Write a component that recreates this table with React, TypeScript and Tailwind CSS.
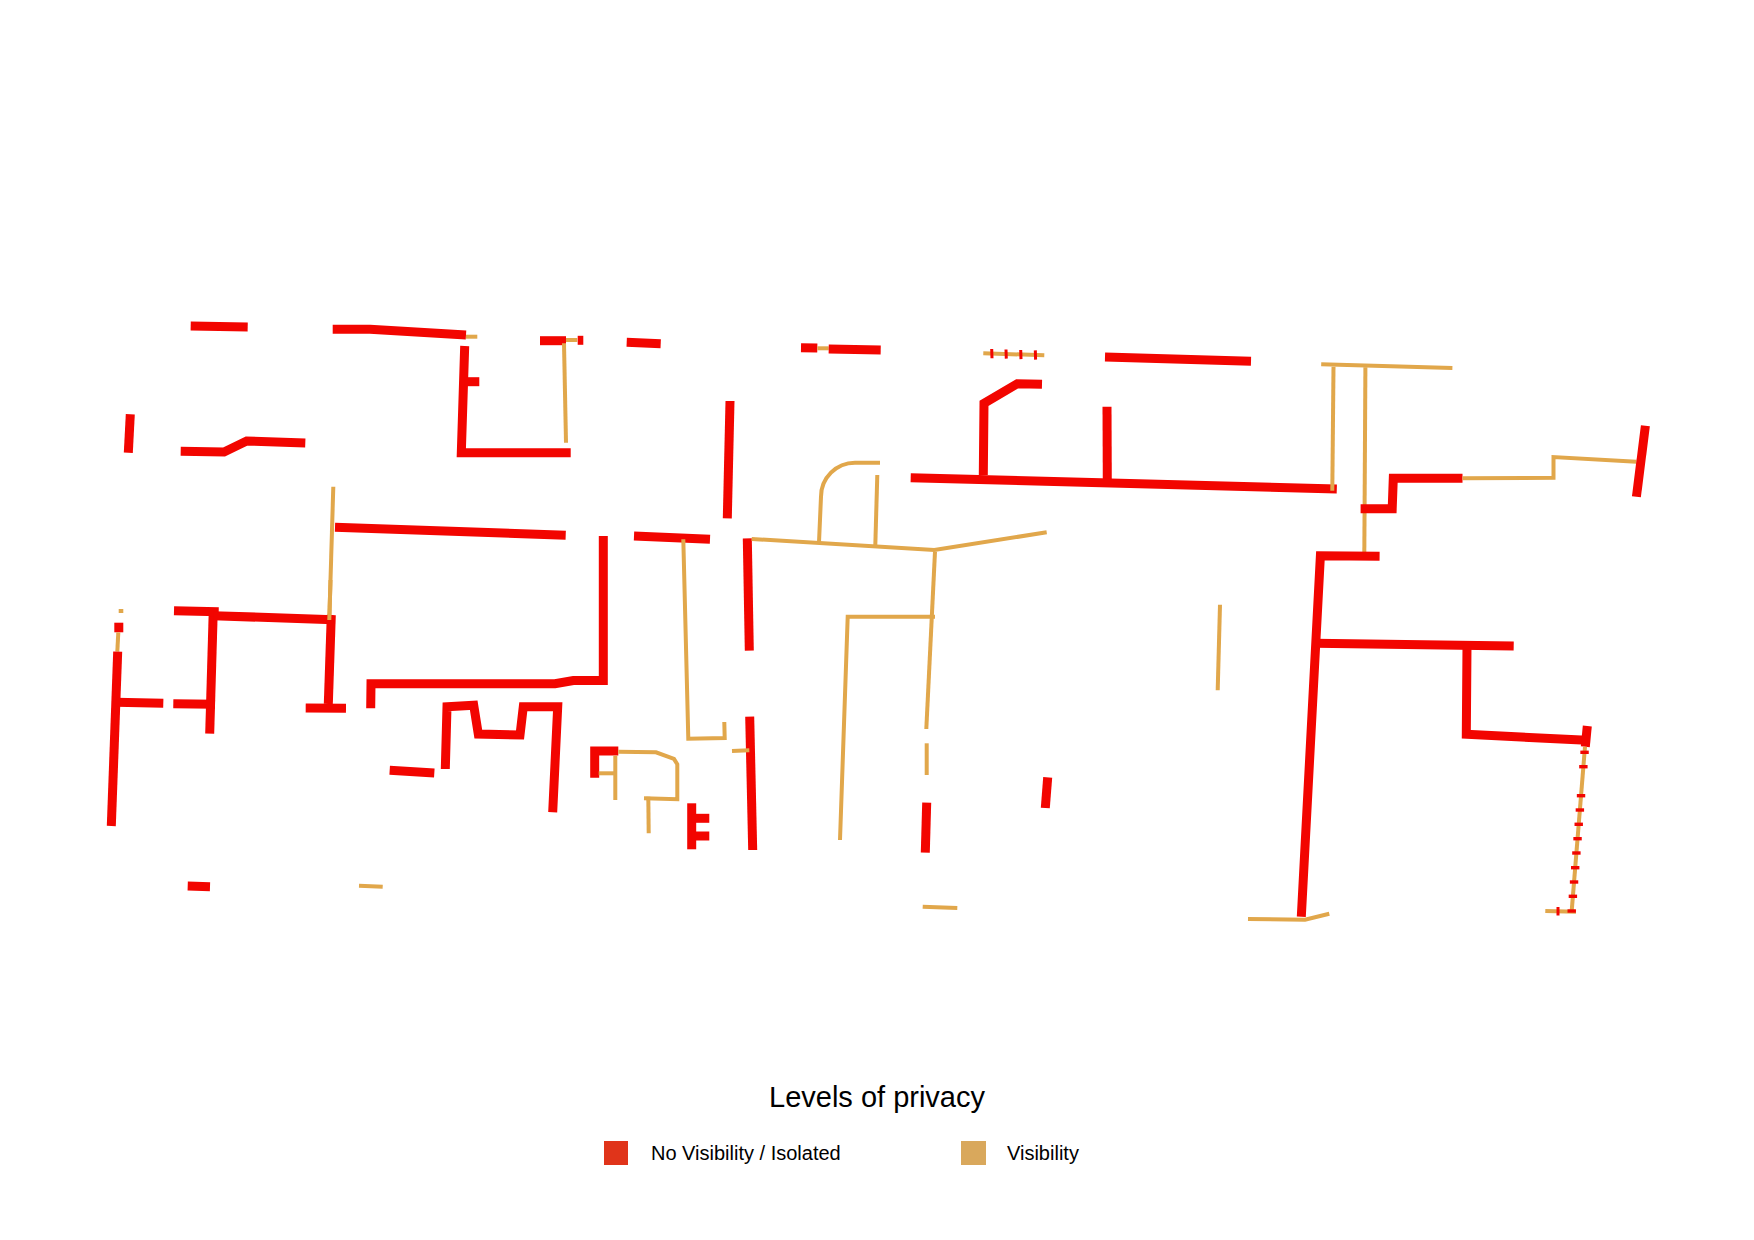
import React from "react";

const R = "#f20500";
const O = "#e1a74b";

type Seg = { c: "r" | "o" | "t"; p: string };

const segs: Seg[] = [
  // top row
  { c: "r", p: "190.7,326 247.7,327" },
  { c: "r", p: "332.7,329.3 370,329.3 466,335" },
  { c: "o", p: "466,336.7 477.3,336.7" },
  { c: "r", p: "464.7,346 461.3,452.7 570.7,452.7" },
  { c: "r", p: "464.7,381.7 479.3,381.7" },
  { c: "r", p: "540,340.7 566,340.7" },
  { c: "o", p: "566,340 577.3,340" },
  { c: "r", p: "577.7,340.3 583.3,340.3" },
  { c: "o", p: "564,343.3 566,442.7" },
  { c: "r", p: "130.3,414.3 128.3,452.7" },
  { c: "r", p: "180.7,451.3 224,452 246.7,441 305.3,443" },
  { c: "r", p: "626.7,342.3 660.7,343.7" },
  { c: "r", p: "801,347.7 817.3,348" },
  { c: "o", p: "817.3,348.3 828.7,348.3" },
  { c: "r", p: "828.7,349 880.7,350" },
  { c: "o", p: "983.3,353.3 1044.3,355.3" },
  { c: "r", p: "1105,357 1251,361.3" },
  { c: "o", p: "1321.2,364.3 1452.4,368" },
  // middle left
  { c: "r", p: "335,527.3 565.7,535.3" },
  { c: "o", p: "333.3,486.7 329.3,620" },
  { c: "r", p: "370.7,708.3 371,683.7 555,683.7 573.3,680.5 603.3,680.5 603.3,536" },
  { c: "o", p: "118.7,611 123.3,611" },
  { c: "r", p: "118.8,622.7 118.8,632.3" },
  { c: "o", p: "118.3,632.3 117.3,651.7" },
  { c: "r", p: "117.7,651.7 111.3,826" },
  { c: "r", p: "116,702.3 163.3,703.3" },
  { c: "r", p: "173.3,703.7 215,704.3" },
  { c: "r", p: "213.3,609.3 209.7,733.7" },
  { c: "r", p: "174,610.7 218.7,611.7" },
  { c: "r", p: "213.3,615.7 333.3,619.7" },
  { c: "r", p: "331.3,615 328.3,704" },
  { c: "o", p: "330.5,580 329.3,620" },
  { c: "r", p: "305.7,708 346,708.3" },
  { c: "r", p: "445.3,769 447,706.7 473.7,705.3 478.3,734 520,735 523.3,706.7 557.7,706.7 552.7,812.3" },
  { c: "r", p: "389.7,770.3 434.3,773" },
  { c: "r", p: "187.7,886 210,886.7" },
  { c: "o", p: "359,885.7 382.7,886.7" },
  // middle centre
  { c: "r", p: "594.7,777.7 594.7,751 618.3,751" },
  { c: "o", p: "618.3,751.7 656,752.3 674,759 677.3,764.3 677.3,799.3 644,798.3" },
  { c: "o", p: "615.3,755.7 615.3,800" },
  { c: "o", p: "598.7,773.3 615.3,773.3" },
  { c: "o", p: "648.3,796.7 648.7,833.3" },
  { c: "r", p: "691.7,803.3 691.7,849.3" },
  { c: "r", p: "691.7,818.3 709.3,818.3" },
  { c: "r", p: "691.7,836 709.3,836" },
  { c: "r", p: "634,536 710,539.3" },
  { c: "o", p: "683.3,539.3 688.3,738.7 724.7,738 724.3,722" },
  { c: "r", p: "747.3,538.3 749.3,650.7" },
  { c: "r", p: "749.7,716.7 752.7,850" },
  { c: "o", p: "732,751 749.3,750.3" },
  { c: "r", p: "730,401 727.3,518.3" },
  { c: "o", p: "751.7,539 934.3,550 1046.7,532.3" },
  { c: "o", p: "877.3,475 875.3,545.3" },
  { c: "o", p: "840,840 847.7,616.7 935,616.7" },
  { c: "o", p: "935,551.7 926.3,729" },
  { c: "o", p: "926.7,743.3 926.7,775" },
  { c: "r", p: "926.7,802.7 925.3,852.7" },
  { c: "o", p: "922.7,906.7 957.3,908" },
  { c: "r", p: "1047.7,777.3 1045.3,808" },
  // middle right
  { c: "r", p: "983.3,475 984,403.3 1017.3,383.7 1042,384.3" },
  { c: "r", p: "1107,406.7 1107.3,482" },
  { c: "r", p: "910.7,477.7 1336.8,489" },
  { c: "o", p: "1333.5,366.7 1332.3,490.7" },
  { c: "o", p: "1365.4,367.3 1364.3,556.7" },
  { c: "r", p: "1360.6,508.7 1392.2,508.7 1393.3,478.3 1462.5,478.3" },
  { c: "o", p: "1462.5,478.3 1553.5,477.7 1553.5,457 1636.4,461.7" },
  { c: "r", p: "1645.4,425.7 1636.4,496.7" },
  { c: "r", p: "1379.6,556.3 1320.4,555.7 1301.3,916.7" },
  { c: "o", p: "1220,604.7 1217.7,690.3" },
  { c: "r", p: "1315,643.3 1513.7,646" },
  { c: "r", p: "1467,646 1466.3,734.3 1586.7,740.3" },
  { c: "r", p: "1587.3,726 1585.3,746.7" },
  { c: "o", p: "1585,746.7 1571.7,911" },
  { c: "o", p: "1545.3,911 1576,911.7" },
  { c: "o", p: "1248,919 1305,919.7 1329.3,913.7" },
];

const topTicks = [991.7, 1006, 1020.7, 1035.3];
const rightTickYs = [752.3, 766.7, 795.7, 810, 824.3, 838.7, 853, 867.7, 882, 896.3, 911];

function Map() {
  return (
    <svg
      width={1754}
      height={1080}
      viewBox="0 0 1754 1080"
      className="block"
      fill="none"
      strokeLinecap="butt"
      strokeLinejoin="miter"
    >
      {segs.map((s, i) => (
        <polyline
          key={i}
          points={s.p}
          stroke={s.c === "r" ? R : O}
          strokeWidth={s.c === "r" ? 9 : 4}
        />
      ))}
      <path d="M819,542.3 L821,496.7 A34,34 0 0 1 855,462.7 L880,462.7" stroke={O} strokeWidth={4} />
      {topTicks.map((x, i) => {
        const y = 353.3 + ((x - 983.3) / 61) * 2;
        return <line key={"tt" + i} x1={x} y1={y - 4.6} x2={x + 0.3} y2={y + 4.6} stroke={R} strokeWidth={3} />;
      })}
      {rightTickYs.map((y, i) => {
        const x = 1585 - (13.3 * (y - 746.7)) / 164.3;
        return <line key={"rt" + i} x1={x - 4.2} y1={y} x2={x + 4.2} y2={y} stroke={R} strokeWidth={3.4} />;
      })}
      <line x1={1558} y1={907} x2={1558} y2={915.5} stroke={R} strokeWidth={3} />
    </svg>
  );
}

export default function App() {
  return (
    <div className="w-[1754px] h-[1240px] bg-white overflow-hidden" style={{ fontFamily: '"Liberation Sans", Arial, sans-serif' }}>
      <Map />
      <div className="h-[34px] leading-[34px] text-center text-[29px] text-black">Levels of privacy</div>
      <div className="mt-[27px] flex h-[24px] items-center pl-[604px]">
        <div className="flex w-[357px] items-center">
          <div className="h-[24px] w-[24px] bg-[#e0341a]" />
          <span className="ml-[23px] text-[20px] leading-[24px] text-black">No Visibility / Isolated</span>
        </div>
        <div className="flex items-center">
          <div className="h-[24px] w-[25px] bg-[#d9a85c]" />
          <span className="ml-[21px] text-[20px] leading-[24px] text-black">Visibility</span>
        </div>
      </div>
    </div>
  );
}
